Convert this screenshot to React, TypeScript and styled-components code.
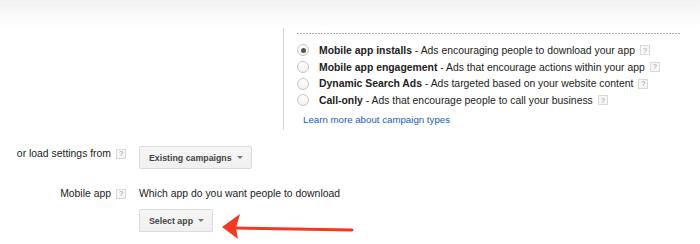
import React from "react";
import styled, { createGlobalStyle } from "styled-components";

const GlobalStyle = createGlobalStyle`
  body {
    margin: 0;
    background: #fff;
    color: #222;
    font-family: "Liberation Sans", Arial, sans-serif;
  }
`;

const Page = styled.div`
  width: 700px;
  height: 244px;
  overflow: hidden;
  font-size: 10.4px;
`;

const TopShade = styled.div`
  height: 28px;
  background: linear-gradient(#f1f1f1, #fff);
`;

const TypePanel = styled.div`
  box-sizing: border-box;
  height: 102px;
  margin-left: 283px;
  padding: 5px 0 0 13px;
  border-left: 1px solid #d2d2d2;
`;

const DashedRule = styled.div`
  width: 383px;
  height: 1px;
  background: repeating-linear-gradient(to right, #b0b0b0 0 2px, transparent 2px 3px);
  margin-bottom: 8px;
`;

const RadioRow = styled.label`
  display: flex;
  align-items: center;
  height: 16.7px;
  white-space: nowrap;
`;

const RadioCircle = styled.span<{ checked?: boolean }>`
  box-sizing: border-box;
  width: 12px;
  height: 12px;
  margin-right: 10px;
  border: 1px solid #c4c4c4;
  border-radius: 50%;
  background: linear-gradient(#fff, #f2f2f2);
  display: flex;
  align-items: center;
  justify-content: center;

  &::after {
    content: "";
    display: ${({ checked }) => (checked ? "block" : "none")};
    width: 5px;
    height: 5px;
    border-radius: 50%;
    background: #555;
  }
`;

const HelpIcon = styled.span`
  box-sizing: border-box;
  display: inline-flex;
  align-items: center;
  justify-content: center;
  width: 10px;
  height: 10px;
  margin-left: 5px;
  border: 1px solid #d8d8d8;
  background: #f7f7f7;
  color: #9a9a9a;
  font-size: 7.5px;
  line-height: 1;
  flex-shrink: 0;
`;

const LearnMore = styled.a`
  display: block;
  margin-top: 3px;
  padding-left: 6px;
  font-size: 9.7px;
  line-height: 16px;
  color: #1a5bc4;
  text-decoration: none;
  cursor: pointer;
`;

const FormArea = styled.div`
  margin-top: 16px;
  display: flex;
  flex-direction: column;
  gap: 17px;
`;

const FormRow = styled.div`
  display: flex;
  align-items: flex-start;
`;

const FieldLabel = styled.div`
  width: 111px;
  text-align: right;
  line-height: 15px;
  white-space: nowrap;
`;

const FieldHelp = styled(HelpIcon)`
  margin: 3px 13px 0 5px;
`;

const FieldBody = styled.div`
  display: flex;
  flex-direction: column;
  align-items: flex-start;
`;

const Prompt = styled.div`
  line-height: 15px;
  margin-bottom: 8px;
  white-space: nowrap;
`;

const ButtonRow = styled.div`
  display: flex;
  align-items: flex-start;
`;

const MenuButton = styled.button`
  box-sizing: border-box;
  display: inline-flex;
  align-items: center;
  height: 23px;
  padding: 0 8px 0 9px;
  border: 1px solid #dcdcdc;
  border-radius: 2px;
  background: linear-gradient(#f6f6f6, #f0f0f0);
  color: #444;
  font-family: "Liberation Sans", Arial, sans-serif;
  font-size: 8.8px;
  font-weight: bold;
  cursor: pointer;
`;

const Caret = styled.span`
  width: 0;
  height: 0;
  margin-left: 5px;
  border-left: 3px solid transparent;
  border-right: 3px solid transparent;
  border-top: 3px solid #777;
`;

const PointerArrow = styled.svg`
  margin-left: 9px;
  flex-shrink: 0;
`;

const campaignTypes = [
  { name: "Mobile app installs", desc: "Ads encouraging people to download your app", checked: true },
  { name: "Mobile app engagement", desc: "Ads that encourage actions within your app" },
  { name: "Dynamic Search Ads", desc: "Ads targeted based on your website content" },
  { name: "Call-only", desc: "Ads that encourage people to call your business" },
];

const App: React.FC = () => {
  return (
    <>
      <GlobalStyle />
      <Page>
        <TopShade />

        <TypePanel>
          <DashedRule />
          {campaignTypes.map((t) => (
            <RadioRow key={t.name}>
              <RadioCircle checked={t.checked} />
              <b>{t.name}</b>&nbsp;- {t.desc}
              <HelpIcon>?</HelpIcon>
            </RadioRow>
          ))}
          <LearnMore>Learn more about campaign types</LearnMore>
        </TypePanel>

        <FormArea>
          <FormRow>
            <FieldLabel>or load settings from</FieldLabel>
            <FieldHelp>?</FieldHelp>
            <MenuButton>
              Existing campaigns
              <Caret />
            </MenuButton>
          </FormRow>

          <FormRow>
            <FieldLabel>Mobile app</FieldLabel>
            <FieldHelp>?</FieldHelp>
            <FieldBody>
              <Prompt>Which app do you want people to download</Prompt>
              <ButtonRow>
                <MenuButton>
                  Select app
                  <Caret />
                </MenuButton>
                {/* red annotation arrow */}
                <PointerArrow width="132" height="32" viewBox="0 0 132 32">
                  <line x1="12" y1="19" x2="130" y2="21" stroke="#f03a26" strokeWidth="3" strokeLinecap="round" />
                  <polygon points="0,18 18,5 14,19 16,30" fill="#f03a26" />
                </PointerArrow>
              </ButtonRow>
            </FieldBody>
          </FormRow>
        </FormArea>
      </Page>
    </>
  );
};

export default App;
